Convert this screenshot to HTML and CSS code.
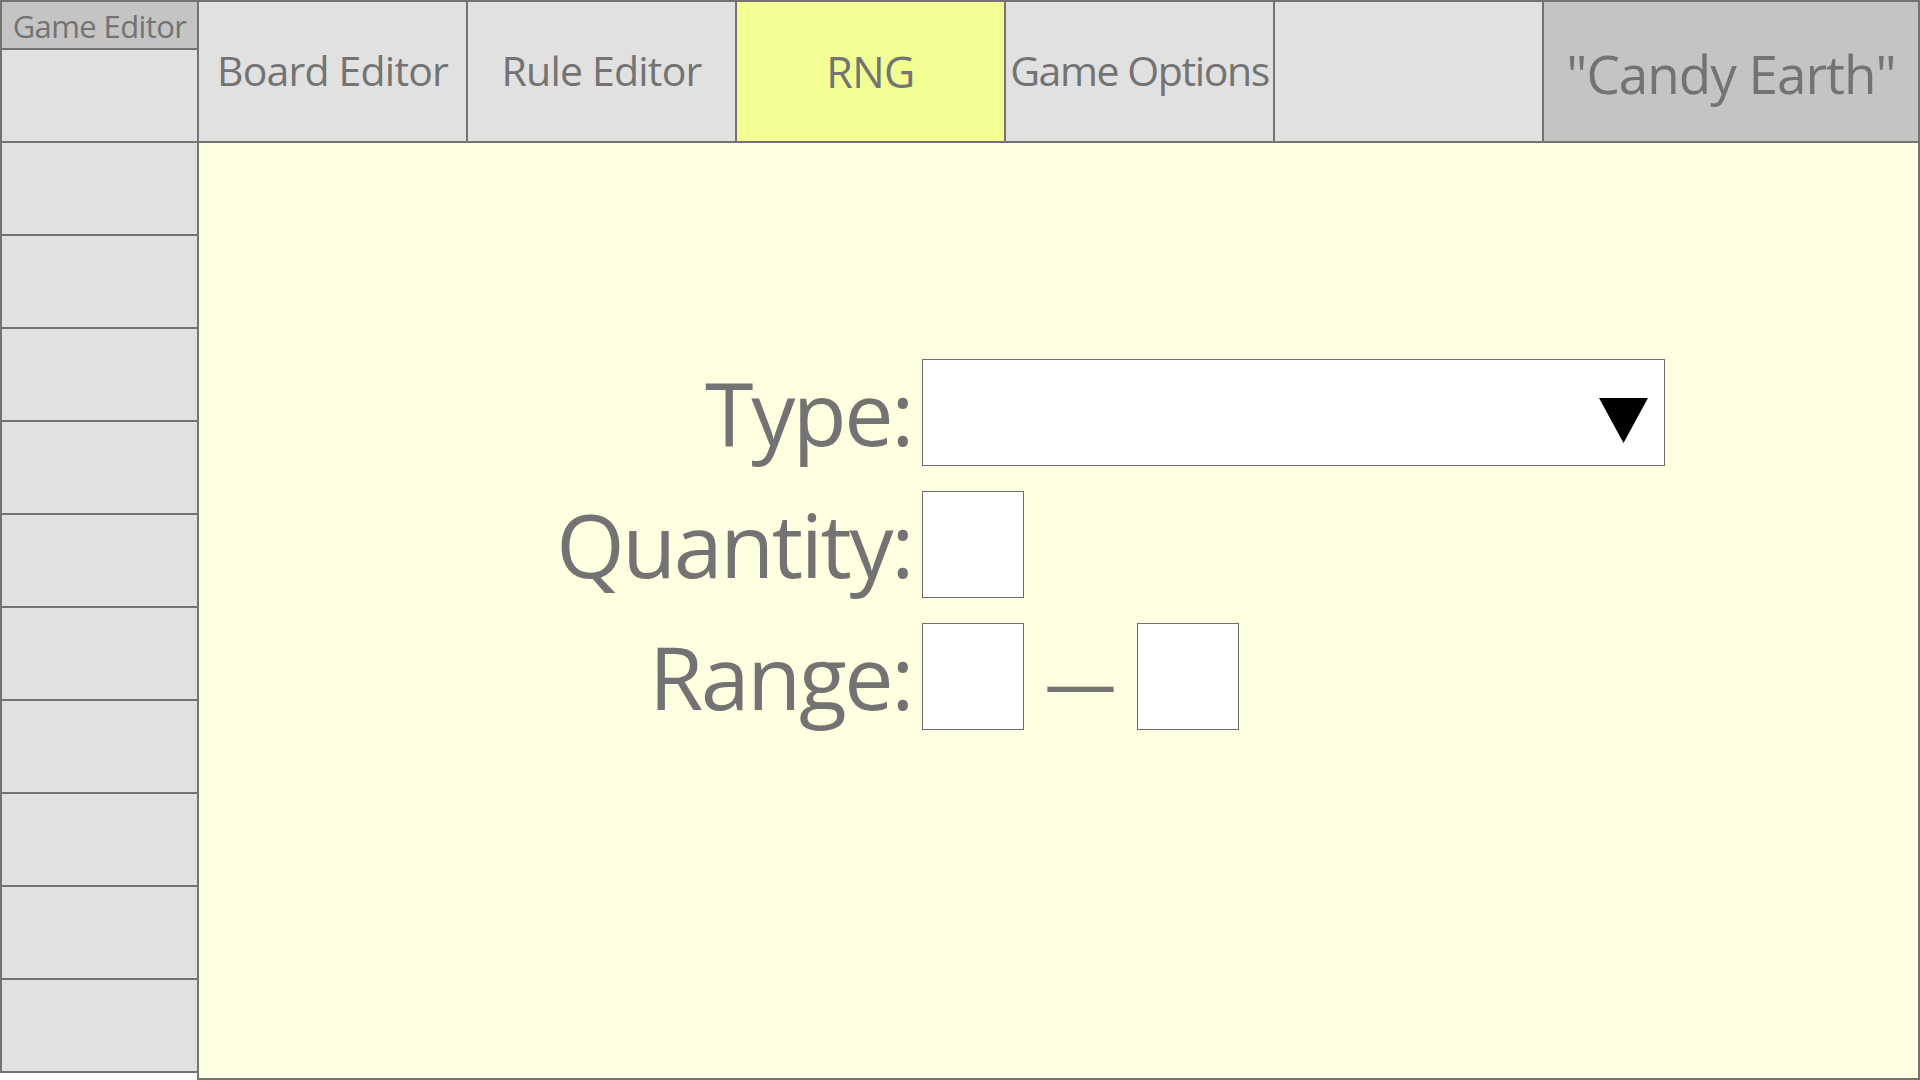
FILE: index.html
```html
<!DOCTYPE html>
<html lang="en">
<head>
<meta charset="utf-8">
<title>Game Editor - RNG</title>
<link rel="stylesheet" href="styles.css">
</head>
<body>
<div class="app">
  <aside class="sidebar">
    <div class="brand">Game Editor</div>
    <div class="side-item"></div>
    <div class="side-item"></div>
    <div class="side-item"></div>
    <div class="side-item"></div>
    <div class="side-item"></div>
    <div class="side-item"></div>
    <div class="side-item"></div>
    <div class="side-item"></div>
    <div class="side-item"></div>
    <div class="side-item"></div>
    <div class="side-item"></div>
  </aside>
  <div class="main">
    <nav class="tabs">
      <div class="tab">Board Editor</div>
      <div class="tab">Rule Editor</div>
      <div class="tab tab-active">RNG</div>
      <div class="tab tab-tight">Game Options</div>
      <div class="tab"></div>
      <div class="tab tab-title">"Candy Earth"</div>
    </nav>
    <section class="panel">
      <div class="form">
        <div class="label">Type:</div>
        <div class="select">
          <svg class="caret" width="49" height="45" viewBox="0 0 49 45"><polygon points="0,0 49,0 24.5,45" fill="#000"/></svg>
        </div>
        <div class="label">Quantity:</div>
        <div class="field-row"><div class="field"></div></div>
        <div class="label">Range:</div>
        <div class="field-row">
          <div class="field"></div>
          <span class="dash">—</span>
          <div class="field"></div>
        </div>
      </div>
    </section>
  </div>
</div>
</body>
</html>
```
FILE: styles.css
```css
* { box-sizing: border-box; }
html, body { margin: 0; padding: 0; background: #ffffff; }
body {
  width: 1920px;
  height: 1080px;
  overflow: hidden;
  font-family: "Open Sans", "Noto Sans", sans-serif;
  color: #737373;
}
.app {
  display: grid;
  grid-template-columns: 197px 1723px;
  height: 1080px;
}
.sidebar {
  display: flex;
  flex-direction: column;
}
.brand {
  height: 50px;
  background: #c4c4c4;
  border: 2px solid #737373;
  border-right: none;
  display: flex;
  align-items: center;
  justify-content: center;
  font-size: 31px;
  letter-spacing: -0.6px;
  padding-top: 2px;
}
.side-item {
  height: 93px;
  background: #e1e1e1;
  border-left: 2px solid #737373;
  border-bottom: 2px solid #737373;
}
.main {
  display: flex;
  flex-direction: column;
}
.tabs {
  display: grid;
  grid-template-columns: repeat(5, 269px) 378px;
  height: 143px;
}
.tab {
  background: #e1e1e1;
  border-top: 2px solid #737373;
  border-bottom: 2px solid #737373;
  border-left: 2px solid #737373;
  display: flex;
  align-items: center;
  justify-content: center;
  font-size: 41px;
  letter-spacing: -0.8px;
  white-space: nowrap;
  overflow: hidden;
  padding-bottom: 3px;
}
.tab-tight {
  letter-spacing: -1.4px;
}
.tab-active {
  background: #f1ff93;
  font-size: 43px;
  letter-spacing: -0.5px;
  padding-bottom: 0;
}
.tab-title {
  background: #c4c4c4;
  border-right: 2px solid #737373;
  font-size: 53px;
  letter-spacing: -1px;
  padding-bottom: 0;
  padding-top: 4px;
}
.panel {
  flex: 1;
  background: #ffffe1;
  border-left: 2px solid #737373;
  border-right: 2px solid #737373;
  border-bottom: 2px solid #737373;
}
.form {
  display: grid;
  grid-template-columns: 715px auto;
  grid-auto-rows: 107px;
  column-gap: 8px;
  row-gap: 25px;
  margin-top: 216px;
}
.label {
  text-align: right;
  font-size: 88px;
  letter-spacing: -2.4px;
  line-height: 107px;
  white-space: nowrap;
  padding-right: 2px;
}
.select {
  width: 743px;
  height: 107px;
  background: #ffffff;
  border: 1px solid #6e6e6e;
  display: flex;
  justify-content: flex-end;
  align-items: flex-start;
  padding: 38px 16px 0 0;
}
.field-row {
  display: flex;
  align-items: flex-start;
}
.field {
  width: 102px;
  height: 107px;
  background: #ffffff;
  border: 1px solid #6e6e6e;
}
.dash {
  width: 113px;
  text-align: center;
  font-size: 72px;
  line-height: 107px;
  padding-top: 5px;
}
```
